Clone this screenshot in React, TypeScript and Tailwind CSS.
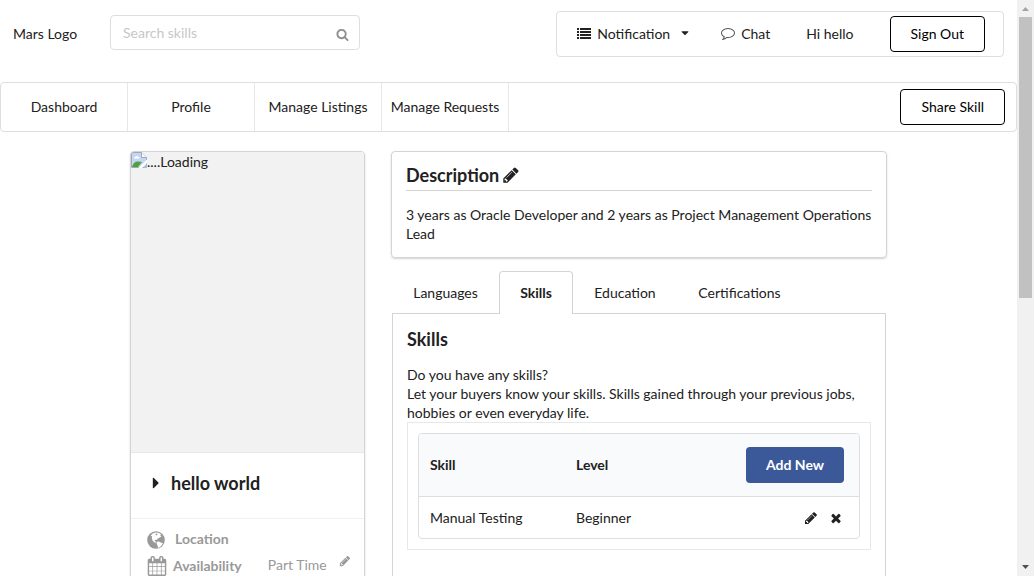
import type { ReactNode } from "react";

const PATHS = {
  pencil:
    "M491 1536l91-91-235-235-91 91v107h128v128h107zm523-928q0-22-22-22-10 0-17 7l-542 542q-7 7-7 17 0 22 22 22 10 0 17-7l542-542q7-7 7-17zm-54-192l416 416-832 832h-416v-416zm683 96q0 53-37 90l-166 166-416-416 166-165q36-38 90-38 53 0 91 38l235 234q37 39 37 91z",
  search:
    "M1216 832q0-185-131.5-316.5t-316.5-131.5-316.5 131.5-131.5 316.5 131.5 316.5 316.5 131.5 316.5-131.5 131.5-316.5zm512 832q0 52-38 90t-90 38q-54 0-90-38l-343-342q-179 124-399 124-143 0-273.5-55.5t-225-150-150-225-55.5-273.5 55.5-273.5 150-225 225-150 273.5-55.5 273.5 55.5 225 150 150 225 55.5 273.5q0 220-124 399l343 343q37 37 37 90z",
  list:
    "M0 256h256v256h-256zM384 256h1408v256h-1408zM0 640h256v256h-256zM384 640h1408v256h-1408zM0 1024h256v256h-256zM384 1024h1408v256h-1408zM0 1408h256v256h-256zM384 1408h1408v256h-1408z",
  comment:
    "M896 384q-204 0-381.5 69.5t-282 187.5-104.5 255q0 112 71.5 213.5t201.5 175.5l87 50-27 96q-24 91-70 172 152-63 275-171l43-38 57 6q69 8 130 8 204 0 381.5-69.5t282-187.5 104.5-255-104.5-255-282-187.5-381.5-69.5zm896 512q0 174-120 321.5t-326 233-450 85.5q-70 0-145-8-198 175-460 242-49 14-114 22h-5q-15 0-27-10.5t-16-27.5v-1q-3-4-.5-12t2-10 4.5-9.5l6-9 7-8.5 8-9q7-8 31-34.5t34.5-38 31-39.5 32.5-51 27-59 26-76q-157-89-247.5-220t-90.5-281q0-174 120-321.5t326-233 450-85.5 450 85.5 326 233 120 321.5z",
  times:
    "M1490 1322q0 40-28 68l-136 136q-28 28-68 28t-68-28l-294-294-294 294q-28 28-68 28t-68-28l-136-136q-28-28-28-68t28-68l294-294-294-294q-28-28-28-68t28-68l136-136q28-28 68-28t68 28l294 294 294-294q28-28 68-28t68 28l136 136q28 28 28 68t-28 68l-294 294 294 294q28 28 28 68z",
  calendar:
    "M192 1664h288v-288h-288v288zm352 0h320v-288h-320v288zm-352-352h288v-320h-288v320zm352 0h320v-320h-320v320zm-352-384h288v-288h-288v288zm736 736h320v-288h-320v288zm-384-736h320v-288h-320v288zm768 736h288v-288h-288v288zm-384-352h320v-320h-320v320zm-352-864v-288q0-13-9.5-22.5t-22.5-9.5h-64q-13 0-22.5 9.5t-9.5 22.5v288q0 13 9.5 22.5t22.5 9.5h64q13 0 22.5-9.5t9.5-22.5zm736 864h288v-320h-288v320zm-384-384h320v-288h-320v288zm384 0h288v-288h-288v288zm32-480v-288q0-13-9.5-22.5t-22.5-9.5h-64q-13 0-22.5 9.5t-9.5 22.5v288q0 13 9.5 22.5t22.5 9.5h64q13 0 22.5-9.5t9.5-22.5zm384-64v1280q0 52-38 90t-90 38h-1408q-52 0-90-38t-38-90v-1280q0-52 38-90t90-38h128v-96q0-66 47-113t113-47h64q66 0 113 47t47 113v96h384v-96q0-66 47-113t113-47h64q66 0 113 47t47 113v96h128q52 0 90 38t38 90z",
  caretDown: "M1408 704q0 26-19 45l-448 448q-19 19-45 19t-45-19l-448-448q-19-19-19-45t19-45 45-19h896q26 0 45 19t19 45z",
  caretRight: "M1152 896q0 26-19 45l-448 448q-19 19-45 19t-45-19-19-45v-896q0-26 19-45t45-19 45 19l448 448q19 19 19 45z",
};

function Icon({ name, className }: { name: keyof typeof PATHS; className: string }) {
  return (
    <svg viewBox="0 0 1792 1792" fill="currentColor" aria-hidden="true" className={`shrink-0 ${className}`}>
      <path d={PATHS[name]} />
    </svg>
  );
}

function Globe() {
  return (
    <svg viewBox="0 0 18 18" aria-hidden="true" className="size-[18px] shrink-0">
      <circle cx="9" cy="9" r="8.8" fill="currentColor" />
      <path
        d="M5.600 2.600l3-1.200 3.400.5 2 1.300-.8 1.400 1.200 1-1.600 1-1.600.6-1.400 1.500-1.700.2-.6 1 1 .6 1.200.6-.6.7-2-.6-1.600-1.700-.7-2.200.3-1.800-1.300-1z"
        fill="#fff"
      />
      <path d="M10 10.800l1.800-.3 2 .9 2.100.8-1.100 2-1.800 1.700-2 1-.4-2.300-1-1.800z" fill="#fff" />
      <path d="M8.300 2.900l1.700-.3.500 1.100-1.300.9z" fill="currentColor" />
    </svg>
  );
}

function BrokenImage() {
  return (
    <svg viewBox="0 0 16 16" aria-hidden="true" className="size-4 shrink-0">
      <path d="M.5.5h10l5 5v10H.5z" fill="#c3d6f5" stroke="#a3a9b3" />
      <path d="M3 6.500q0-2 2-2 1-1 2 .2 2 .2 1.500 1.800z" fill="#fff" />
      <path d="M1 15q2-6 6-5.500l4 .5-4 5z" fill="#4fa03f" />
      <path d="M10.500.5v5h5" fill="#fff" stroke="#a3a9b3" />
      <path d="M7.500 16l8.500-8.500v3.500l-5 5z" fill="#fff" />
      <path d="M12 16l4-4v4z" fill="#a9bddb" />
    </svg>
  );
}

function OutlineButton({ children }: { children: ReactNode }) {
  return (
    <button type="button" className="h-9 rounded border border-black bg-white px-5 pb-[2px] text-black">
      {children}
    </button>
  );
}

const NAV = ["Dashboard", "Profile", "Manage Listings", "Manage Requests"];

function Header() {
  return (
    <header className="flex items-start justify-between pt-[11px] pr-[13px] pl-[13px]">
      <div className="flex items-center gap-8 pt-1">
        <a href="#home" className="w-[65px] pt-px whitespace-nowrap">Mars Logo</a>
        <label className="flex h-[35px] w-[250px] items-center rounded border border-[#dededf] pr-[10px] pl-3">
          <input
            type="text"
            aria-label="Search skills"
            placeholder="Search skills"
            className="min-w-0 flex-1 outline-none placeholder:text-[#c7c7c7]"
          />
          <Icon name="search" className="mt-[3px] size-[13px] text-[#8f8f8f]" />
        </label>
      </div>
      <div className="flex h-[46px] items-center rounded border border-[#dededf] pr-[18px] pl-5">
        <button type="button" className="flex items-center pb-[2px]">
          <Icon name="list" className="mr-[6px] size-[14px]" />
          Notification
          <Icon name="caretDown" className="ml-[9px] size-3" />
        </button>
        <a href="#chat" className="ml-[30px] flex items-center gap-[6px] pb-[2px]">
          <Icon name="comment" className="size-[14px] text-[#555]" />
          Chat
        </a>
        <span className="mr-9 ml-9 pb-[2px]">Hi hello</span>
        <OutlineButton>Sign Out</OutlineButton>
      </div>
    </header>
  );
}

function ProfileCard() {
  return (
    <aside className="overflow-hidden rounded border border-[#d4d4d5] shadow-[0_1px_2px_#d4d4d5]">
      <div role="img" aria-label="....Loading" className="flex h-[300px] items-start bg-[#f2f2f2]">
        <BrokenImage />
        <span className="leading-5">....Loading</span>
      </div>
      <div className="flex h-[66px] items-center border-t border-[#e8e8e8] pb-[6px] pl-4">
        <Icon name="caretRight" className="size-[18px]" />
        <h2 className="ml-[6px] text-lg font-bold">hello world</h2>
      </div>
      <div className="border-t border-[#f0f0f0] px-4 pt-2 text-[#999]">
        <div className="flex h-[26px] items-center gap-[10px] font-bold">
          <Globe />
          <span className="pb-[3px]">Location</span>
        </div>
        <div className="flex h-[26px] items-center whitespace-nowrap">
          <Icon name="calendar" className="size-[20px]" />
          <span className="ml-[6px] pb-[2px] font-bold">Availability</span>
          <span className="ml-[26px] pb-[3px]">Part Time</span>
          <button type="button" aria-label="Edit availability" className="mb-[10px] ml-3">
            <Icon name="pencil" className="size-3" />
          </button>
        </div>
      </div>
    </aside>
  );
}

function Tabs() {
  return (
    <div role="tablist" className="ml-px flex h-[43px] items-stretch">
      <button role="tab" type="button" className="w-[107px] border-b border-[#d4d4d5]">Languages</button>
      <button role="tab" type="button" aria-selected="true" className="w-[74px] rounded-t border border-b-0 border-[#d4d4d5] pb-[2px] font-bold">
        Skills
      </button>
      <button role="tab" type="button" className="w-[104px] border-b border-[#d4d4d5]">Education</button>
      <button role="tab" type="button" className="w-[125px] border-b border-[#d4d4d5]">Certifications</button>
      <div className="mr-px flex-1 border-b border-[#d4d4d5]" />
    </div>
  );
}

function SkillsTable() {
  return (
    <div className="overflow-hidden rounded border border-[#dededf]">
      <table className="w-full table-fixed text-left">
        <thead className="bg-[#f9fafb]">
          <tr className="h-[62px] border-b border-[#dededf]">
            <th className="w-[146px] pl-[11px] font-bold">Skill</th>
            <th className="pl-[11px] font-bold">Level</th>
            <th className="w-[130px] pr-[15px] text-right">
              <button type="button" className="h-9 rounded bg-[#3b5998] px-5 font-bold text-white">Add New</button>
            </th>
          </tr>
        </thead>
        <tbody>
          <tr className="h-[42px]">
            <td className="pl-[11px]">Manual Testing</td>
            <td className="pl-[11px]">Beginner</td>
            <td className="pr-4">
              <div className="flex justify-end gap-[11px] pt-px">
                <button type="button" aria-label="Edit skill"><Icon name="pencil" className="size-[14px]" /></button>
                <button type="button" aria-label="Delete skill"><Icon name="times" className="size-[14px]" /></button>
              </div>
            </td>
          </tr>
        </tbody>
      </table>
    </div>
  );
}

function ScrollRail() {
  return (
    <div aria-hidden="true" className="flex h-screen w-[17px] shrink-0 flex-col items-center justify-between bg-[#f1f1f1]">
      <div className="flex w-full flex-col items-center">
        <svg viewBox="0 0 17 17" className="size-[17px]"><path d="M5 11l3.500-4 3.500 4z" fill="#a3a3a3" /></svg>
        <div className="h-[281px] w-[13px] bg-[#c1c1c1]" />
      </div>
      <svg viewBox="0 0 17 17" className="size-[17px]"><path d="M5 6l3.500 4 3.500-4z" fill="#505050" /></svg>
    </div>
  );
}

export default function App() {
  return (
    <div className="flex h-screen overflow-hidden bg-white font-['Lato',sans-serif] text-sm leading-[19px] text-[#212121]">
      <div className="min-w-0 flex-1">
        <Header />
        <nav className="mt-[25px] flex h-[50px] items-center justify-between rounded border border-[#dededf] pr-[11px]">
          <div className="flex h-full">
            {NAV.map((item) => (
              <a key={item} href="#nav" className="flex w-[127px] items-center justify-center border-r border-[#e8e8e8] pb-[2px] whitespace-nowrap">
                {item}
              </a>
            ))}
          </div>
          <OutlineButton>Share Skill</OutlineButton>
        </nav>
        <main className="mx-auto mt-[19px] grid max-w-[757px] grid-cols-[235px_minmax(0,1fr)] items-start gap-[26px]">
          <ProfileCard />
          <div>
            <section className="rounded border border-[#d4d4d5] px-[14px] pt-[11px] pb-[14px] shadow-[0_1px_2px_#d4d4d5]">
              <h2 className="flex items-center gap-[3px] border-b border-[#d4d4d5] pb-[3px] text-lg leading-6 font-bold">
                Description
                <button type="button" aria-label="Edit description"><Icon name="pencil" className="size-[18px]" /></button>
              </h2>
              <p className="mt-[14px]">3 years as Oracle Developer and 2 years as Project Management Operations Lead</p>
            </section>
            <div className="mt-[13px]">
              <Tabs />
              <section className="mx-px min-h-[300px] border-x border-[#d4d4d5] px-[14px] pt-[13px]">
                <h2 className="text-lg leading-6 font-bold">Skills</h2>
                <p className="mt-[14px]">
                  Do you have any skills?
                  <br />
                  Let your buyers know your skills. Skills gained through your previous jobs, hobbies or even everyday life.
                </p>
                <div className="border border-[#e8e8e8] p-[10px]">
                  <SkillsTable />
                </div>
              </section>
            </div>
          </div>
        </main>
      </div>
      <ScrollRail />
    </div>
  );
}
